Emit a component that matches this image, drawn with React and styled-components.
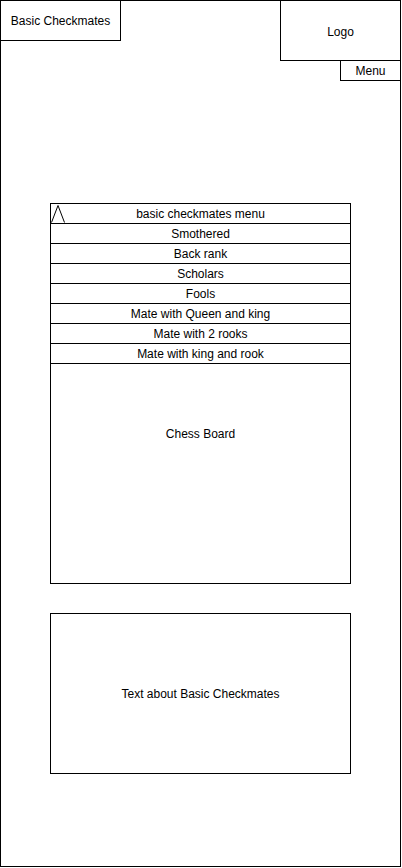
import React from "react";
import styled, { createGlobalStyle } from "styled-components";

const GlobalStyle = createGlobalStyle`
  html, body {
    margin: 0;
    padding: 0;
    background: #ffffff;
  }
  * { box-sizing: border-box; }
  body {
    font-family: "Liberation Sans", Arial, Helvetica, sans-serif;
    font-size: 12px;
    color: #000;
  }
`;

const Frame = styled.div`
  width: 401px;
  height: 867px;
  border: 1px solid #000;
  box-shadow: 0 1px 0 #e4e4e4;
  display: flex;
  flex-direction: column;
`;

const Header = styled.header`
  display: flex;
  justify-content: space-between;
  align-items: flex-start;
  height: 80px;
`;

const Box = styled.div`
  display: flex;
  align-items: center;
  justify-content: center;
  width: ${(p) => p.$w}px;
  height: ${(p) => p.$h}px;
  padding-top: ${(p) => p.$shift || 0}px;
  border-bottom: 1px solid #000;
  border-left: ${(p) => (p.$left ? "1px solid #000" : "none")};
  border-right: ${(p) => (p.$right ? "1px solid #000" : "none")};
  line-height: 14px;
  white-space: nowrap;
`;

const RightCol = styled.div`
  display: flex;
  flex-direction: column;
  align-items: flex-end;
`;

const Main = styled.main`
  display: flex;
  flex-direction: column;
  align-items: flex-start;
  padding-left: 49px;
  padding-top: 122px;
  gap: 29px;
`;

const MenuPanel = styled.section`
  width: 301px;
  border: 1px solid #000;
  display: flex;
  flex-direction: column;
`;

const MenuHeader = styled.div`
  display: grid;
  grid-template-columns: 1fr auto 1fr;
  height: 20px;
  border-bottom: 1px solid #000;
  line-height: 20px;
`;

const Caret = styled.svg`
  justify-self: start;
  margin-left: -1px;
  display: block;
`;

const HeaderTitle = styled.span`
  text-align: center;
  white-space: nowrap;
`;

const MenuItem = styled.div`
  height: 20px;
  border-bottom: 1px solid #000;
  text-align: center;
  line-height: 21px;
  white-space: nowrap;
`;

const Board = styled.div`
  height: 219px;
  padding-top: 63px;
  text-align: center;
  line-height: 14px;
`;

const TextPanel = styled.section`
  width: 301px;
  height: 161px;
  border: 1px solid #000;
  display: flex;
  align-items: center;
  justify-content: center;
  line-height: 14px;
`;

const items = [
  "Smothered",
  "Back rank",
  "Scholars",
  "Fools",
  "Mate with Queen and king",
  "Mate with 2 rooks",
  "Mate with king and rook",
];

export default function App() {
  return (
    <>
      <GlobalStyle />
      <Frame>
        <Header>
          <Box $w={120} $h={40} $right>
            Basic Checkmates
          </Box>
          <RightCol>
            <Box $w={120} $h={60} $shift={2} $left>
              Logo
            </Box>
            <Box $w={60} $h={20} $left>
              Menu
            </Box>
          </RightCol>
        </Header>
        <Main>
          <MenuPanel>
            <MenuHeader>
              <Caret width="16" height="19" viewBox="0 0 16 19">
                <polyline
                  points="1.5,18.5 8,1.5 14.5,18.5"
                  fill="none"
                  stroke="#000"
                  strokeWidth="1"
                />
              </Caret>
              <HeaderTitle>basic checkmates menu</HeaderTitle>
              <span />
            </MenuHeader>
            {items.map((t) => (
              <MenuItem key={t}>{t}</MenuItem>
            ))}
            <Board>Chess Board</Board>
          </MenuPanel>
          <TextPanel>Text about Basic Checkmates</TextPanel>
        </Main>
      </Frame>
    </>
  );
}
